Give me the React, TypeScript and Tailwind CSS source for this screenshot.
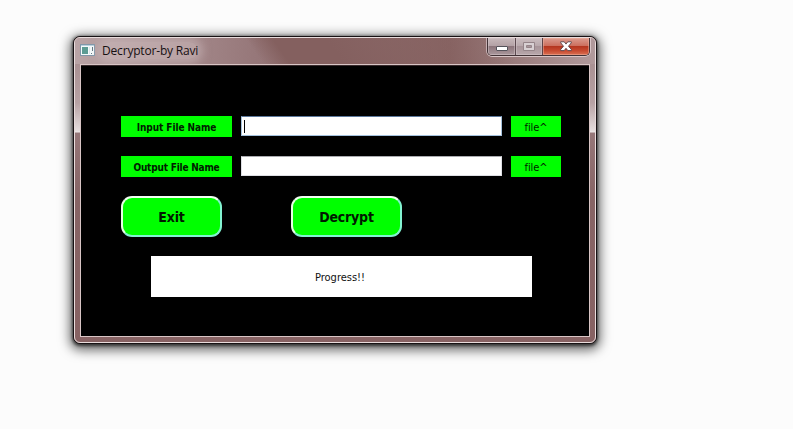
import React from 'react';

const tahoma = "font-['DejaVu_Sans_Condensed','DejaVu_Sans',sans-serif]";

function AppIcon() {
  return (
    <svg width="16" height="13" viewBox="0 0 16 13" className="block shrink-0">
      <rect x="0.5" y="0.5" width="14" height="11" fill="#f5fafb" stroke="#8197a9" />
      <path d="M1 1.5h13" stroke="#b9d1df" />
      <rect x="2" y="3" width="6" height="7" fill="#5c9c94" />
      <rect x="9" y="3" width="1" height="7" fill="#dde7ec" />
      <path d="M12.5 3v4M11 9.5h1" stroke="#617783" />
    </svg>
  );
}

function CaptionButtons() {
  return (
    <div className="mr-[5px] flex h-[18px] w-[103px] shrink-0 overflow-hidden rounded-b-[5px] border border-t-0 border-[#413236] shadow-[0_1px_0_#d8c5c7,-1px_0_0_#c6b0b3,1px_0_0_#d8c5c7]">
      <button aria-label="Minimize" className="flex w-[28px] justify-center border-r border-[#5d4a50] bg-[linear-gradient(#c8b9bb_0%,#b4a2a6_45%,#8c757b_50%,#aa989d_100%)] pt-[8px] shadow-[inset_0_0_0_1px_#d4c6c980]">
        <svg width="12" height="5" viewBox="0 0 12 5"><rect x="0.5" y="0.5" width="11" height="4" rx="0.5" fill="#fff" stroke="#54535b" /></svg>
      </button>
      <button aria-label="Maximize" className="flex w-[27px] justify-center border-r border-[#5d4348] bg-[linear-gradient(#cbbdc0_0%,#b9a9ad_45%,#a8959a_50%,#b8a7ab_100%)] pt-[4px] shadow-[inset_0_0_0_1px_#d4c6c980]">
        <svg width="12" height="9" viewBox="0 0 12 9"><path d="M.5.5h11v8H.5zM3.5 3.5h5v2h-5z" fill="#d8d0d3" fillRule="evenodd" stroke="#958489" /></svg>
      </button>
      <button aria-label="Close" className="flex flex-1 justify-center bg-[linear-gradient(#dc9c90_0%,#cc705f_45%,#b43620_50%,#c84b31_75%,#db7053_100%)] pt-[3px] shadow-[inset_0_0_0_1px_#eeb3a080]">
        <svg width="12" height="11" viewBox="0 0 12 11"><path d="M.7.8h3.5L6 3.1 7.8.8h3.5v1L8.5 5.2l2.8 3.2v1.2H7.8L6 7.3 4.2 9.6H.7V8.4l2.8-3.2L.7 1.8z" fill="#fff" stroke="#58434a" strokeWidth=".9" /></svg>
      </button>
    </div>
  );
}

function FileRow({ label, tracking, active = false }: { label: string; tracking: string; active?: boolean }) {
  return (
    <div className="flex h-[21px]">
      <div className="flex w-[111px] items-center justify-center bg-[#00ff00] pt-[3px]">
        <span className={`${tahoma} ${tracking} whitespace-nowrap text-[10px] font-bold leading-none text-[#002000]`}>{label}</span>
      </div>
      <div className={`ml-[9px] flex h-5 w-[261px] items-center border bg-white pl-[2px] ${active ? 'border-[#a4c1dc] border-t-[#5c789b]' : 'border-[#dedfe4] border-t-[#aaabb0]'}`}>
        {active && <span className="h-[13px] w-px bg-black" />}
      </div>
      <button className={`${tahoma} ml-[9px] w-[50px] bg-[#00ff00] pt-px text-[11px] leading-none tracking-[-0.1px] text-[#002000]`}>file^</button>
    </div>
  );
}

const actionClass = `${tahoma} h-[41px] rounded-[11px] border-2 border-b-[#82f2d1] border-l-[#e5ffe4] border-r-[#82f2d1] border-t-[#f1fff1] bg-[#00ff00] text-[14px] font-bold leading-none tracking-[-0.2px] text-[#001900]`;

export default function App() {
  return (
    <main className="h-[429px] w-[793px] overflow-hidden bg-[#fcfcfc] pl-[73px] pt-9">
      <section className="h-[308px] w-[524px] rounded-[7px] border border-[#171214] bg-[#876263] shadow-[0_1px_3px_1px_rgba(0,0,0,0.55),0_3px_12px_3px_rgba(0,0,0,0.6)]">
        <div className="h-full rounded-[6px] border border-[#e9dddd] bg-[linear-gradient(#a98e91_0px,#aa9294_28px,#b7a2a4_65px,#e5dddd_93px,#eee8e8_94px,#967779_95px,#876465_160px,#876263_100%)] px-[5px]">
          <header className="-mx-[5px] flex h-[26px] items-start justify-between overflow-hidden rounded-t-[5px] bg-[linear-gradient(55deg,transparent_35%,#84605f_40%,#84605f_50%,transparent_82%),linear-gradient(90deg,#b9a4a6_0%,#967779_35%,#886463_72%,#b19a9c_100%)]">
            <div className="flex items-center pl-[5px] pt-[4px]">
              <AppIcon />
              <span className="ml-[6px] rounded-full bg-[#d0bec080] font-['Open_Sans','Noto_Sans',sans-serif] text-[12px] leading-[17px] tracking-[-0.18px] text-[#171012] shadow-[0_0_8px_5px_#d0bec080]">Decryptor-by Ravi</span>
            </div>
            <CaptionButtons />
          </header>
          <div className="h-[273px] border border-[#d8c5c5] bg-black shadow-[inset_0_1px_0_#382a2c]">
            <div className="pl-10 pt-[51px]">
              <FileRow label="Input File Name" tracking="tracking-[-0.08px]" active />
              <div className="mt-[19px]"><FileRow label="Output File Name" tracking="tracking-[-0.2px]" /></div>
              <div className="mt-[19px] flex gap-[69px]">
                <button className={`${actionClass} w-[101px]`}>Exit</button>
                <button className={`${actionClass} w-[111px]`}>Decrypt</button>
              </div>
              <div className={`${tahoma} ml-[30px] mt-[19px] flex h-[41px] w-[381px] items-center justify-center bg-white pr-[3px] pt-[2px] text-[11px] leading-none text-[#111]`}>Progress!!</div>
            </div>
          </div>
        </div>
      </section>
    </main>
  );
}
